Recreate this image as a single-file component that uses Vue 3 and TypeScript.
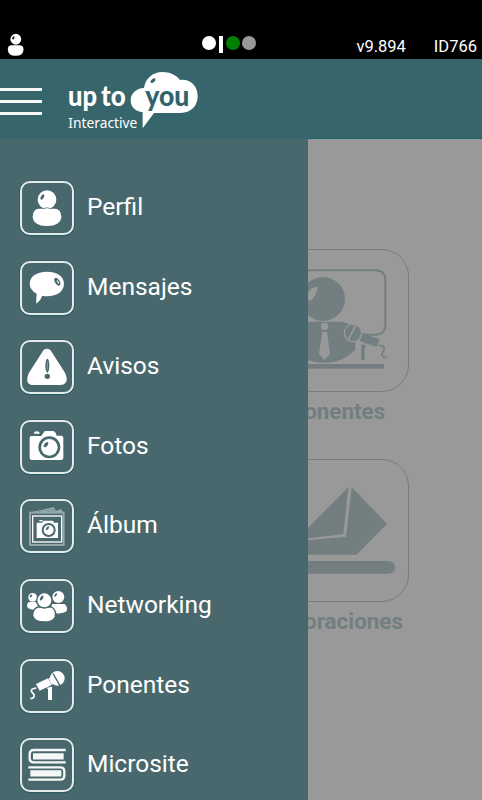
<script setup lang="ts">
type IconName = 'profile' | 'message' | 'alert' | 'camera' | 'album' | 'network' | 'mic' | 'books'

interface MenuItem {
  label: string
  icon: IconName
}

const menu: MenuItem[] = [
  { label: 'Perfil', icon: 'profile' },
  { label: 'Mensajes', icon: 'message' },
  { label: 'Avisos', icon: 'alert' },
  { label: 'Fotos', icon: 'camera' },
  { label: 'Álbum', icon: 'album' },
  { label: 'Networking', icon: 'network' },
  { label: 'Ponentes', icon: 'mic' },
  { label: 'Microsite', icon: 'books' },
]
</script>

<template>
  <div class="screen">
    <div class="status">
      <svg class="user" viewBox="0 0 48 66">
        <path d="M11 35Q2 36 2 47Q2 65 24 65Q47 65 47 47Q47 36 37 35Z" fill="#fff" />
        <circle cx="25" cy="18" r="15.500" fill="#fff" />
        <ellipse cx="18" cy="14" rx="3" ry="5" transform="rotate(35 18 14)" fill="#222" />
      </svg>
      <div class="dots">
        <i class="dot white"></i><i class="bar"></i><i class="dot green"></i><i class="dot gray"></i>
      </div>
      <span class="version">v9.894</span>
      <span class="ident">ID766</span>
    </div>

    <header class="header">
      <div class="burger"><i></i><i></i><i></i></div>
      <svg class="logo" viewBox="0 0 435 210">
        <path d="M248 187V139C227 137 212 124 212 103C212 82 229 67 252 66C256 38 278 18 307 18C331 18 350 28 360 42C392 38 413 61 413 91C413 121 392 141 362 141H282Z" fill="#fff" />
        <ellipse cx="279" cy="44" rx="5" ry="9" transform="rotate(50 279 44)" fill="#36656c" />
        <text class="bold" x="24" y="120" textLength="87" lengthAdjust="spacingAndGlyphs">up</text>
        <text class="bold" x="123" y="120" textLength="74" lengthAdjust="spacingAndGlyphs">to</text>
        <text class="bold you" x="256" y="120" textLength="132" lengthAdjust="spacingAndGlyphs">you</text>
        <text class="light" x="25" y="187" textLength="207" lengthAdjust="spacingAndGlyphs">Interactive</text>
      </svg>
    </header>

    <div class="body">
      <main class="grid">
        <section class="tile">
          <div class="frame">
            <svg viewBox="0 0 429 429">
              <g fill="none" stroke="#737e80">
                <path d="M60 64H330Q358 65 358 92V231Q356 257 330 257H288" stroke-width="6" />
                <path d="M337 289Q354 288 355 299Q355 303 350 309Q343 326 362 326" stroke-width="5" />
              </g>
              <g fill="#737e80">
                <path d="M100 218H225Q259 222 268 250V302Q230 341 174 341Q115 341 85 305V250Q88 224 100 218Z" />
                <circle cx="171" cy="150" r="66" />
                <rect x="70" y="345" width="284" height="14" />
                <path d="M286 285L302 290L296 298V333H285Z" />
                <circle cx="261" cy="252" r="28" fill="#999" />
                <circle cx="261" cy="252" r="24" />
                <path d="M290 252L340 271L332 294L281 276Z" />
              </g>
              <path d="M268 231L247 272" stroke="#999" stroke-width="5" />
              <path d="M287 254L278 275" stroke="#999" stroke-width="4" />
              <g fill="#999">
                <path d="M124 150Q123 119 149 113Q157 113 154 122Q150 139 138 152Q129 159 124 150Z" />
                <circle cx="176" cy="232" r="11" />
                <path d="M169 249H183L192 315L175 333L159 315Z" />
              </g>
            </svg>
          </div>
          <h2>Ponentes</h2>
        </section>
        <section class="tile">
          <div class="frame">
            <svg viewBox="0 0 429 429">
              <g fill="#737e80">
                <path d="M247 85L125 207V238L232 226Z" />
                <path d="M257 85L363 194L272 287H100V246L240 233Z" />
                <rect x="55" y="306" width="332" height="38" rx="19" />
              </g>
            </svg>
          </div>
          <h2>Valoraciones</h2>
        </section>
      </main>

      <nav class="drawer">
        <a v-for="item in menu" :key="item.icon" class="item">
          <svg class="icon" viewBox="0 0 162 162">
            <rect x="-1" y="0" width="164" height="164" rx="30" fill="none" stroke="#17515a" stroke-width="2" />
            <rect x="3" y="3" width="156" height="156" rx="27" fill="none" stroke="#e4e9e9" stroke-width="6" />

            <g v-if="item.icon === 'profile'" fill="#fff">
              <path d="M57 83Q39 83 38 107Q40 134 81 135Q122 134 124 107Q122 83 105 83Z" />
              <circle cx="81" cy="56" r="28" />
              <path d="M70 83Q81 77 93 83" stroke="#48686e" stroke-width="2" />
              <ellipse class="cut" cx="67" cy="48" rx="4.500" ry="9" transform="rotate(32 67 48)" />
            </g>

            <g v-else-if="item.icon === 'message'" fill="#fff">
              <path d="M81 32Q131 34 132 69Q129 104 81 106Q74 106 67 104Q62 119 49 128Q48 123 50 98Q29 88 29 67Q32 34 81 32Z" />
              <ellipse class="cut" cx="112" cy="62" rx="7" ry="13" transform="rotate(-32 112 62)" />
              <ellipse cx="114" cy="63" rx="2" ry="6" transform="rotate(-32 114 63)" />
            </g>

            <g v-else-if="item.icon === 'alert'">
              <path d="M81 26Q91 26 97 39L135 98Q144 118 137 128Q132 135 120 135H42Q28 135 24 128Q18 118 27 98L65 39Q71 26 81 26Z" fill="#fff" />
              <ellipse class="cut" cx="82" cy="77" rx="6" ry="21" />
              <circle class="cut" cx="82" cy="109" r="8" />
              <path d="M82 65V89" stroke="#a5b5b8" stroke-width="2" />
            </g>

            <g v-else-if="item.icon === 'camera'" fill="#fff">
              <path d="M33 48H64L70 39Q72 33 78 33H98Q104 33 107 39L110 47H125Q130 48 130 54V113Q130 120 123 120H36Q29 120 29 113V54Q29 49 33 48Z" />
              <path d="M42 41Q42 34 50 34Q58 34 60 41Z" />
              <circle class="cut" cx="88" cy="82" r="33" />
              <circle cx="88" cy="82" r="25" />
              <ellipse class="cut" cx="78" cy="74" rx="5" ry="9" transform="rotate(38 78 74)" />
            </g>

            <g v-else-if="item.icon === 'album'">
              <path d="M32 40L101 25L108 35L122 30L128 39" fill="#a6b5b8" />
              <path d="M52 38L104 30M80 38L122 34" stroke="#5f7b80" stroke-width="2" />
              <rect x="30" y="41" width="101" height="97" fill="none" stroke="#93a6a9" stroke-width="6" />
              <rect x="38" y="51" width="87" height="78" fill="none" stroke="#fff" stroke-width="4" />
              <g fill="#fff">
                <path d="M52 71H66L71 65H99L102 71H114V117H50V72Z" />
                <rect x="58" y="63" width="10" height="4" />
              </g>
              <circle class="cut" cx="86" cy="93" r="21" />
              <circle cx="86" cy="93" r="15" fill="#fff" />
              <path d="M77 94Q78 82 88 82L85 91Z" class="cut" />
            </g>

            <g v-else-if="item.icon === 'network'" fill="#fff">
              <path d="M26 69H48L56 86L46 93Q22 91 21 80Q21 73 26 69Z" />
              <circle cx="38" cy="55" r="13" />
              <path d="M97 75H134Q144 84 140 96Q133 103 112 104L91 86Z" />
              <circle cx="115" cy="54" r="18" />
              <g stroke="#48686e" stroke-width="4">
                <path d="M54 84H95Q109 92 106 113Q99 129 73 129Q43 129 38 110Q38 89 54 84Z" />
                <circle cx="73" cy="64" r="23" />
              </g>
              <ellipse class="cut" cx="33" cy="51" rx="3" ry="5" transform="rotate(35 33 51)" />
              <ellipse class="cut" cx="65" cy="57" rx="4" ry="8" transform="rotate(35 65 57)" />
              <ellipse class="cut" cx="107" cy="48" rx="3" ry="6" transform="rotate(35 107 48)" />
            </g>

            <g v-else-if="item.icon === 'mic'" fill="#fff">
              <circle cx="112" cy="58" r="22" />
              <path d="M99 44L120 80" stroke="#48686e" stroke-width="4" />
              <path d="M48 75L84 58L95 78L59 95Z" />
              <path d="M87 57L97 76" stroke="#fff" stroke-width="4" />
              <path d="M80 86L96 83V123H84V91Z" />
              <path d="M49 87Q32 89 34 97L42 107Q45 117 31 119" fill="none" stroke="#fff" stroke-width="5" />
            </g>

            <g v-else fill="none" stroke="#f5f7f7" stroke-width="7">
              <path d="M137 36H41Q29 36 29 49V61Q29 73 41 73H137" />
              <path d="M25 88H121Q133 88 133 100V112Q133 125 121 125H25" />
              <path d="M39 55H131M31 106H124" stroke-width="19" />
            </g>
          </svg>
          <span>{{ item.label }}</span>
        </a>
      </nav>
    </div>
  </div>
</template>

<style>
body {
  margin: 0;
  overflow: hidden;
}
</style>

<style scoped>
.screen {
  width: 482px;
  height: 800px;
  display: flex;
  flex-direction: column;
  overflow: hidden;
  font-family: Roboto, sans-serif;
  background: #999;
}
.status {
  box-sizing: border-box;
  height: 59px;
  flex: none;
  display: flex;
  align-items: flex-start;
  padding: 33px 5px 0 7px;
  background: #000;
  color: #fff;
  font-size: 16.500px;
  line-height: 27px;
}
.user {
  width: 17px;
  height: 23px;
}
.dots {
  display: flex;
  margin: 3px 0 0 178px;
}
.dot {
  width: 14px;
  height: 14px;
  border-radius: 50%;
}
.white {
  background: #fff;
}
.bar {
  width: 4px;
  height: 17px;
  background: #fff;
  margin: 0 3px;
}
.green {
  background: #008000;
  margin-right: 2px;
}
.gray {
  background: #999;
}
.version {
  margin-left: auto;
}
.ident {
  margin-left: 28px;
}
.header {
  flex: none;
  height: 79px;
  display: flex;
  background: #36656c;
}
.burger {
  width: 42px;
  margin-right: 18px;
  padding-top: 29px;
  display: flex;
  flex-direction: column;
  gap: 9px;
}
.burger i {
  height: 3px;
  background: #f6f8f8;
}
.logo {
  width: 145px;
  height: 70px;
  margin-top: 7px;
}
.logo text {
  fill: #fff;
  font-family: "Noto Sans", sans-serif;
}
.logo .bold {
  font-family: Lato, sans-serif;
  font-size: 84px;
  font-weight: 900;
}
.logo .you {
  fill: #2f646c;
}
.logo .light {
  font-size: 43px;
}
.body {
  flex: 1;
  position: relative;
}
.grid {
  height: 662px;
  border-top: 1px solid #17616a;
  padding: 110px 0 0 266px;
  box-sizing: border-box;
  background: #999;
}
.tile {
  width: 143px;
  height: 210px;
}
.frame {
  box-sizing: border-box;
  width: 143px;
  height: 143px;
  border: 1px solid #737e80;
  border-radius: 27px;
}
.frame svg {
  display: block;
  width: 143px;
  height: 143px;
  margin: -1px;
}
.tile h2 {
  margin: 6px 0 0;
  color: #737e80;
  font-size: 22.400px;
  line-height: 26px;
  font-weight: 700;
  text-align: center;
}
.drawer {
  position: absolute;
  left: 0;
  top: 0;
  width: 308px;
  height: 662px;
  box-sizing: border-box;
  border-top: 1px solid #36656c;
  padding: 42px 0 0 20px;
  overflow: hidden;
  background: #48686e;
}
.item {
  display: flex;
  align-items: flex-start;
  height: 79.600px;
  color: #fff;
  font-size: 24.500px;
  line-height: 29px;
}
.icon {
  width: 54px;
  height: 54px;
  overflow: visible;
  flex: none;
}
.item span {
  margin: 11px 0 0 13px;
}
.cut {
  fill: #48686e;
}
</style>
